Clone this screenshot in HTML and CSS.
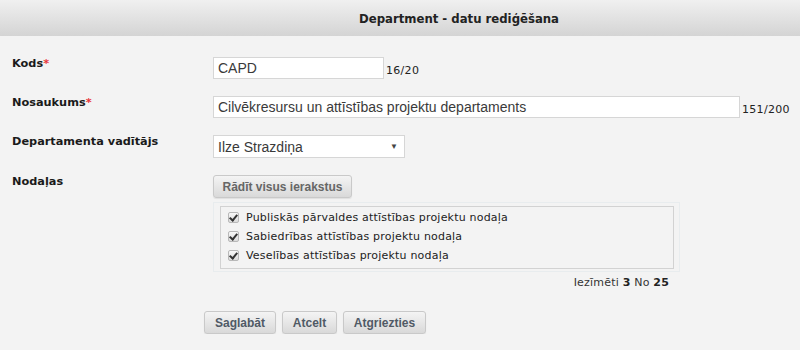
FILE: index.html
```html
<!DOCTYPE html>
<html lang="lv">
<head>
  <meta charset="UTF-8">
  <title>Department - datu rediģēšana</title>
  <link rel="stylesheet" href="styles.css">
</head>
<body>

  <div class="header">
    <h1>Department - datu rediģēšana</h1>
  </div>

  <form class="edit-form">
    <div class="row">
      <label class="label">Kods<span class="req">*</span></label>
      <div class="field">
        <input class="text short" type="text" value="CAPD">
        <span class="counter">16/20</span>
      </div>
    </div>

    <div class="row">
      <label class="label">Nosaukums<span class="req">*</span></label>
      <div class="field">
        <input class="text long" type="text" value="Cilvēkresursu un attīstības projektu departaments">
        <span class="counter">151/200</span>
      </div>
    </div>

    <div class="row">
      <label class="label">Departamenta vadītājs</label>
      <div class="field">
        <div class="select">
          <span>Ilze Strazdiņa</span>
          <span class="arrow">▼</span>
        </div>
      </div>
    </div>

    <div class="row">
      <label class="label">Nodaļas</label>
      <div class="field column">
        <button type="button" class="btn">Rādīt visus ierakstus</button>
        <div class="list-wrap">
          <div class="list">
            <div class="check-row"><span class="check"></span>Publiskās pārvaldes attīstības projektu nodaļa</div>
            <div class="check-row"><span class="check"></span>Sabiedrības attīstības projektu nodaļa</div>
            <div class="check-row"><span class="check"></span>Veselības attīstības projektu nodaļa</div>
          </div>
        </div>
        <div class="summary">Iezīmēti <b>3</b> No <b>25</b></div>
      </div>
    </div>

    <div class="actions">
      <button type="button" class="btn">Saglabāt</button>
      <button type="button" class="btn">Atcelt</button>
      <button type="button" class="btn">Atgriezties</button>
    </div>
  </form>

</body>
</html>
```

FILE: styles.css
```css
body {
  margin: 0;
  background-color: #f3f3f3;
  font-family: "DejaVu Sans", Verdana, sans-serif;
  color: #222;
}

.header {
  height: 36px;
  background: linear-gradient(#f0f0f0, #d4d4d4);
  display: flex;
  align-items: center;
  justify-content: center;
  padding-left: 118px;
}

.header h1 {
  margin: 0;
  font-family: "DejaVu Sans Condensed", "DejaVu Sans", sans-serif;
  font-stretch: condensed;
  font-size: 13px;
  font-weight: bold;
  color: #222;
}

.edit-form {
  padding: 21px 0 0 12px;
}

.row {
  display: flex;
  margin-bottom: 17px;
}

.label {
  width: 201px;
  flex-shrink: 0;
  font-size: 11.3px;
  font-weight: bold;
  line-height: 14px;
  color: #1a1a1a;
}

.req {
  color: #e8363b;
}

.field {
  display: flex;
  align-items: flex-end;
}

.field.column {
  flex-direction: column;
  align-items: stretch;
}

.text {
  box-sizing: border-box;
  height: 22px;
  border: 1px solid #d6d6d6;
  background: #fff;
  padding: 0 4px;
  font-family: "Liberation Sans", Arial, sans-serif;
  font-size: 14px;
  color: #3a3a3a;
  margin: 0;
}

.short { width: 171px; }
.long { width: 527px; }

.counter {
  font-size: 11px;
  letter-spacing: 0.3px;
  color: #222;
  padding-left: 2px;
  line-height: 13px;
  margin-bottom: 2px;
}

.select {
  box-sizing: border-box;
  width: 192px;
  height: 23px;
  border: 1px solid #d6d6d6;
  background: #fff;
  display: flex;
  align-items: center;
  justify-content: space-between;
  padding: 0 6px 0 4px;
  font-family: "Liberation Sans", Arial, sans-serif;
  font-size: 14px;
  color: #3a3a3a;
}

.arrow {
  font-size: 8px;
  color: #444;
}

.btn {
  box-sizing: border-box;
  height: 23px;
  padding: 0 9px;
  border: 1px solid #c9c9c9;
  border-radius: 3px;
  background: linear-gradient(#f4f4f4, #d9d9d9);
  font-family: "Liberation Sans", Arial, sans-serif;
  font-size: 12px;
  font-weight: bold;
  color: #505a66;
  cursor: pointer;
  box-shadow: 0 1px 1px rgba(0, 0, 0, 0.08);
}

.field.column .btn {
  align-self: flex-start;
  width: 139px;
  padding: 0;
  color: #666;
}

.list-wrap {
  margin-top: 4px;
  width: 467px;
  box-sizing: border-box;
  border: 1px solid #e8ecee;
  padding: 3px 5px 2px 6px;
}

.list {
  border: 1px solid #d2d2d2;
  height: 63px;
  padding-top: 1px;
  box-sizing: border-box;
}

.check-row {
  display: flex;
  align-items: center;
  height: 19px;
  padding-left: 7px;
  font-size: 11px;
  letter-spacing: 0.2px;
  color: #222;
}

.check {
  width: 9px;
  height: 9px;
  border: 1px solid #b8b8b8;
  border-radius: 2px;
  background: linear-gradient(#f8f8f8, #dcdcdc);
  margin-right: 7px;
  position: relative;
}

.check::after {
  content: "";
  position: absolute;
  left: 2px;
  top: 0;
  width: 3px;
  height: 6px;
  border-right: 2px solid #333;
  border-bottom: 2px solid #333;
  transform: rotate(40deg);
}

.summary {
  width: 456px;
  text-align: right;
  font-size: 11px;
  letter-spacing: 0.2px;
  color: #333;
  margin-top: 4px;
}

.summary b {
  color: #222;
}

.actions {
  display: flex;
  gap: 6px;
  padding-left: 192px;
  margin-top: 22px;
}

.actions .btn:nth-child(1) { width: 72px; }
.actions .btn:nth-child(2) { width: 55px; }
.actions .btn:nth-child(3) { width: 83px; }
```
